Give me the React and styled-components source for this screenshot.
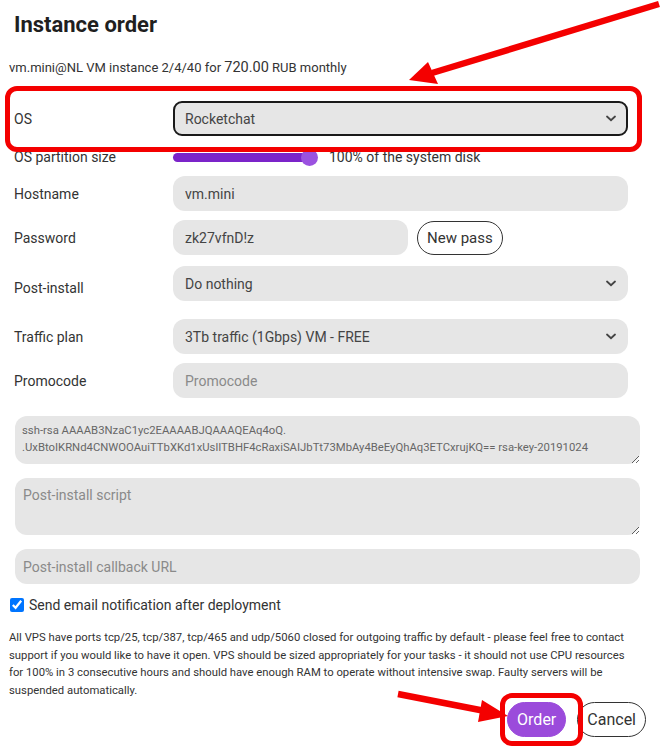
import React from "react";
import styled, { createGlobalStyle } from "styled-components";

const Global = createGlobalStyle`
  html, body { margin: 0; padding: 0; background: #fff; }
  body { font-family: Roboto, "Liberation Sans", sans-serif; color: #222; }
  * { box-sizing: border-box; }
`;

const Page = styled.div`
  position: relative;
  width: 661px;
  height: 746px;
  overflow: hidden;
  background: #fff;
`;

const Title = styled.h1`
  margin: 0;
  padding: 10px 0 0 14px;
  font-size: 22px;
  line-height: 30px;
  font-weight: 700;
  color: #1f1f1f;
`;

const Subtitle = styled.p`
  margin: 19px 0 0 9px;
  font-size: 13px;
  line-height: 18px;
  color: #333;
  span { font-size: 14.5px; }
`;

const Row = styled.div`
  display: grid;
  grid-template-columns: 159px 455px;
  align-items: center;
  padding-left: 14px;
  margin-top: ${(p) => p.$mt}px;
  height: ${(p) => p.$h}px;
`;

const Label = styled.div`
  font-size: 14px;
  color: #333;
  padding-top: ${(p) => p.$shift || 0}px;
`;

const fieldBase = `
  height: 35px;
  border-radius: 12px;
  background: #e6e6e6;
  border: none;
  font-family: Roboto, "Liberation Sans", sans-serif;
  font-size: 14px;
  color: #444;
  padding: 0 12px;
  outline: none;
`;

const Input = styled.input`
  ${fieldBase}
  width: ${(p) => p.$w || "100%"};
  &::placeholder { color: #8a8a8a; }
`;

const SelectBox = styled.div`
  ${fieldBase}
  width: 100%;
  display: flex;
  align-items: center;
  justify-content: space-between;
  ${(p) => p.$active && `border: 2px solid #1a1a1a; border-radius: 9px; padding: 0 10px;`}
`;

const Chevron = () => (
  <svg width="10" height="7" viewBox="0 0 10 7">
    <path d="M1 1.5 L5 5.2 L9 1.5" fill="none" stroke="#444" strokeWidth="1.8" strokeLinecap="round" />
  </svg>
);

const SliderLine = styled.div`
  display: flex;
  align-items: center;
  gap: 12px;
  font-size: 14px;
  color: #333;
`;

const Track = styled.div`
  position: relative;
  width: 144px;
  height: 9px;
  border-radius: 5px;
  background: #7b24c9;
`;

const Thumb = styled.div`
  position: absolute;
  right: -1px;
  top: -4px;
  width: 17px;
  height: 17px;
  border-radius: 50%;
  background: #9b52e0;
`;

const FieldGroup = styled.div`
  display: flex;
  align-items: center;
  gap: 9px;
`;

const PillButton = styled.button`
  height: ${(p) => p.$h || 35}px;
  padding: 0 ${(p) => p.$px || 9}px;
  border-radius: 18px;
  font-family: Roboto, "Liberation Sans", sans-serif;
  font-size: ${(p) => p.$fs || 16}px;
  cursor: pointer;
  border: 1px solid ${(p) => (p.$primary ? "#9b4bdb" : "#333")};
  background: ${(p) => (p.$primary ? "#9b4bdb" : "#fff")};
  color: ${(p) => (p.$primary ? "#fff" : "#333")};
`;

const Block = styled.div`
  padding-left: 15px;
  margin-top: ${(p) => p.$mt}px;
`;

const TextArea = styled.textarea`
  display: block;
  width: 625px;
  height: ${(p) => p.$h}px;
  border: none;
  border-radius: 12px;
  background: #e6e6e6;
  font-family: Roboto, "Liberation Sans", sans-serif;
  font-size: ${(p) => p.$fs || 14}px;
  line-height: ${(p) => p.$lh || 18}px;
  color: #666;
  padding: ${(p) => p.$pad || "8px"};
  outline: none;
  resize: vertical;
  overflow: hidden;
  white-space: pre;
  &::placeholder { color: #8a8a8a; }
`;

const WideInput = styled.input`
  ${fieldBase}
  width: 625px;
  padding: 0 8px;
  &::placeholder { color: #8a8a8a; }
`;

const CheckRow = styled.label`
  display: flex;
  align-items: center;
  gap: 5px;
  margin: 13px 0 0 8px;
  font-size: 14px;
  color: #333;
  input { margin: 0 0 0 2px; width: 14px; height: 14px; }
`;

const Notice = styled.p`
  margin: 16px 0 0 9px;
  width: 625px;
  font-size: 11.3px;
  line-height: 17.5px;
  color: #333;
`;

const Actions = styled.div`
  display: flex;
  justify-content: flex-end;
  gap: 11px;
  padding-right: 15px;
  margin-top: 3px;
`;

const Overlay = styled.svg`
  position: absolute;
  left: 0;
  top: 0;
  pointer-events: none;
`;

const Highlight = styled.div`
  position: absolute;
  left: ${(p) => p.$x}px;
  top: ${(p) => p.$y}px;
  width: ${(p) => p.$w}px;
  height: ${(p) => p.$h}px;
  border: 5px solid #f40000;
  border-radius: 12px;
  pointer-events: none;
`;

export default function App() {
  return (
    <Page>
      <Global />
      <Title>Instance order</Title>
      <Subtitle>
        vm.mini@NL VM instance 2/4/40 for <span>720.00</span> RUB monthly
      </Subtitle>

      <Row $mt={24} $h={35}>
        <Label>OS</Label>
        <SelectBox $active>
          <span>Rocketchat</span>
          <Chevron />
        </SelectBox>
      </Row>

      <Row $mt={12} $h={18}>
        <Label>OS partition size</Label>
        <SliderLine>
          <Track>
            <Thumb />
          </Track>
          100% of the system disk
        </SliderLine>
      </Row>

      <Row $mt={10} $h={35}>
        <Label>Hostname</Label>
        <Input defaultValue="vm.mini" />
      </Row>

      <Row $mt={9} $h={35}>
        <Label>Password</Label>
        <FieldGroup>
          <Input $w="235px" defaultValue="zk27vfnD!z" />
          <PillButton $h={34} $fs={15}>New pass</PillButton>
        </FieldGroup>
      </Row>

      <Row $mt={11} $h={35}>
        <Label $shift={9}>Post-install</Label>
        <SelectBox>
          <span>Do nothing</span>
          <Chevron />
        </SelectBox>
      </Row>

      <Row $mt={18} $h={35}>
        <Label>Traffic plan</Label>
        <SelectBox>
          <span>3Tb traffic (1Gbps) VM - FREE</span>
          <Chevron />
        </SelectBox>
      </Row>

      <Row $mt={9} $h={35}>
        <Label>Promocode</Label>
        <Input placeholder="Promocode" />
      </Row>

      <Block $mt={18}>
        <TextArea
          $h={48}
          $fs={11.3}
          $lh={17}
          $pad="6px 7px"
          defaultValue={"ssh-rsa AAAAB3NzaC1yc2EAAAABJQAAAQEAq4oQ.\n.UxBtoIKRNd4CNWOOAuiTTbXKd1xUslITBHF4cRaxiSAIJbTt73MbAy4BeEyQhAq3ETCxrujKQ== rsa-key-20191024"}
        />
      </Block>

      <Block $mt={14}>
        <TextArea $h={57} $pad="8px 8px" placeholder="Post-install script" />
      </Block>

      <Block $mt={14}>
        <WideInput placeholder="Post-install callback URL" />
      </Block>

      <CheckRow>
        <input type="checkbox" defaultChecked />
        Send email notification after deployment
      </CheckRow>

      <Notice>
        All VPS have ports tcp/25, tcp/387, tcp/465 and udp/5060 closed for outgoing traffic by default - please feel free to contact
        support if you would like to have it open. VPS should be sized appropriately for your tasks - it should not use CPU resources
        for 100% in 3 consecutive hours and should have enough RAM to operate without intensive swap. Faulty servers will be
        suspended automatically.
      </Notice>

      <Actions>
        <PillButton $primary $px={9}>Order</PillButton>
        <PillButton $px={9}>Cancel</PillButton>
      </Actions>

      <Highlight $x={5} $y={86} $w={637} $h={66} />
      <Highlight $x={500} $y={693} $w={83} $h={53} />

      <Overlay width="661" height="746" viewBox="0 0 661 746">
        <line x1="659" y1="4" x2="432" y2="73" stroke="#f40000" strokeWidth="6.5" />
        <polygon points="409,80 428,62 438,84" fill="#f40000" />
        <line x1="398" y1="694" x2="485" y2="711" stroke="#f40000" strokeWidth="6.5" />
        <polygon points="508,716 482,700 478,722" fill="#f40000" />
      </Overlay>
    </Page>
  );
}
